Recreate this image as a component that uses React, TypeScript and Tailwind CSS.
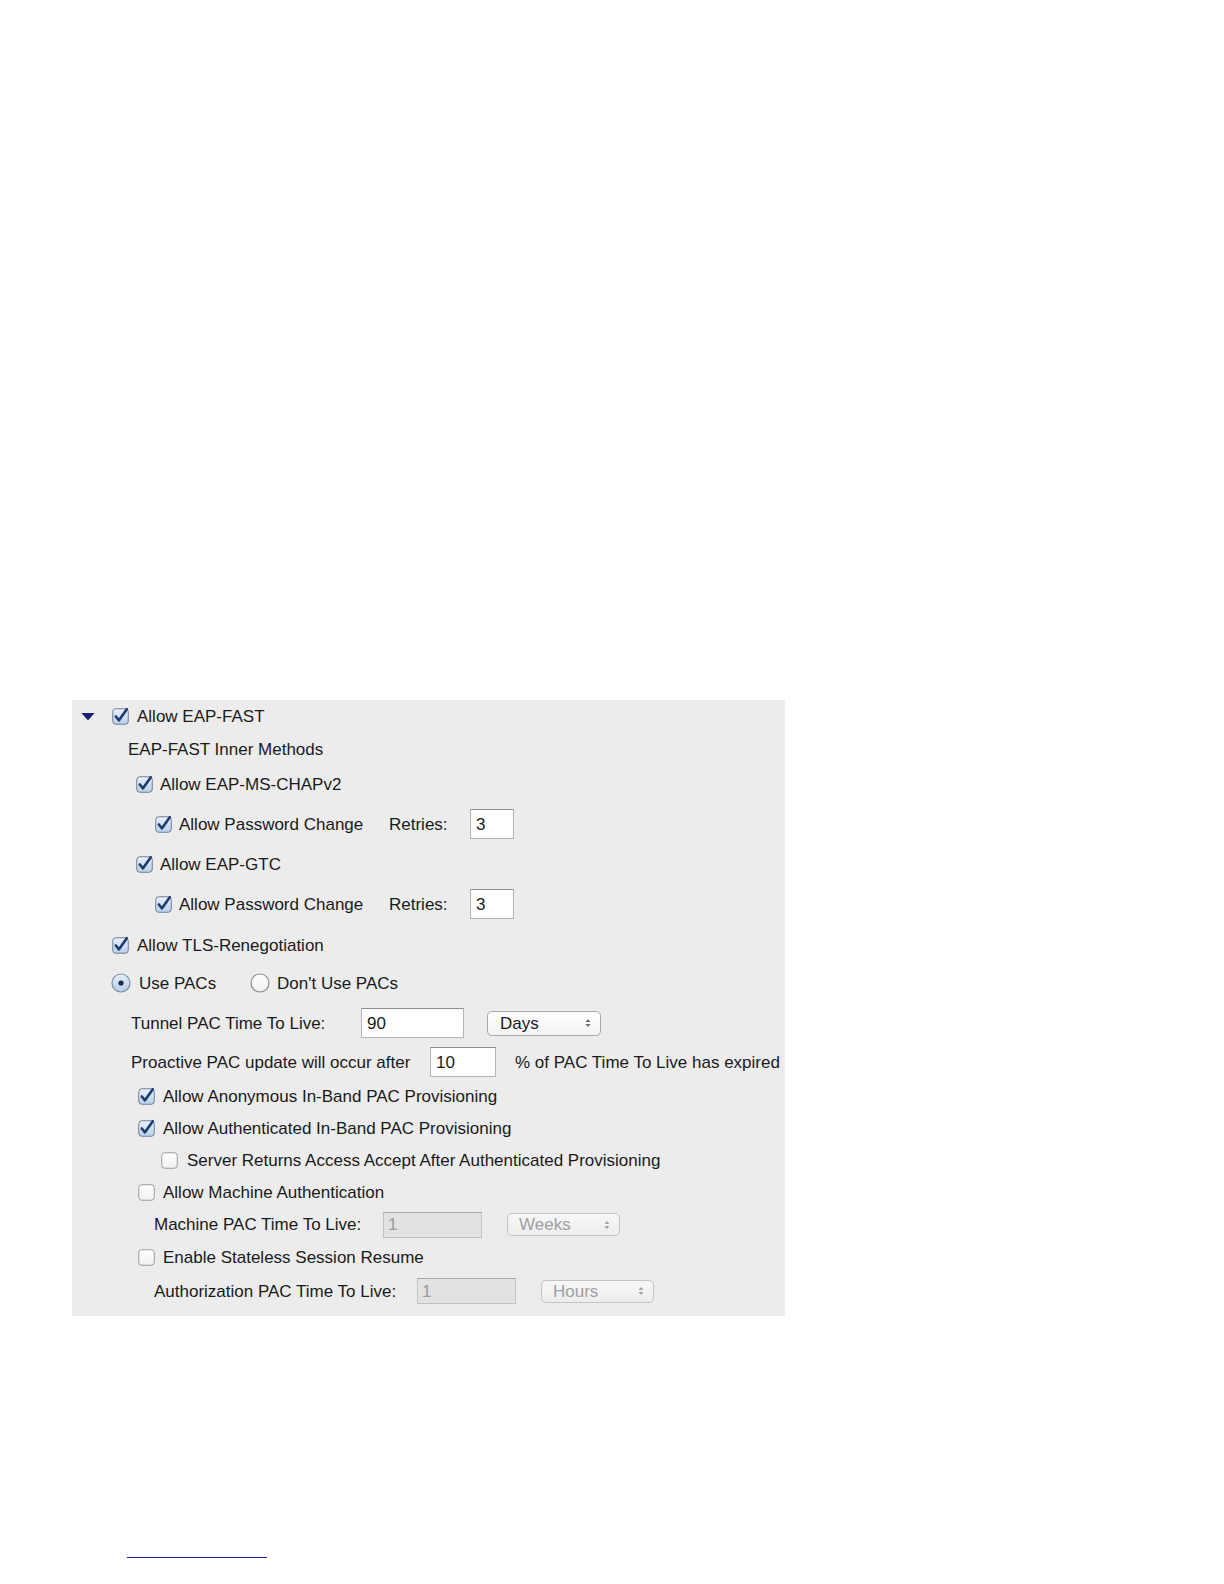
import React from "react";

function Check({ checked }: { checked: boolean }) {
  return (
    <svg width="17" height="17" viewBox="0 0 17 17" className="shrink-0 overflow-visible">
      <defs>
        <linearGradient id={checked ? "cbOn" : "cbOff"} x1="0" y1="0" x2="0" y2="1">
          {checked ? (
            <>
              <stop offset="0" stopColor="#e9f1fb" />
              <stop offset="1" stopColor="#b9cfe9" />
            </>
          ) : (
            <>
              <stop offset="0" stopColor="#ffffff" />
              <stop offset="1" stopColor="#f1f1f1" />
            </>
          )}
        </linearGradient>
      </defs>
      <rect x="0.75" y="0.75" width="15.5" height="15.5" rx="3" fill={`url(#${checked ? "cbOn" : "cbOff"})`} stroke={checked ? "#6d7f96" : "#9a9a9a"} strokeWidth="1" />
      {checked && (
        <path d="M3.8 8.5 L7 12.3 L14.8 1.2" fill="none" stroke="#1e3a70" strokeWidth="2.6" strokeLinecap="round" strokeLinejoin="round" />
      )}
    </svg>
  );
}

function Radio({ checked }: { checked: boolean }) {
  return (
    <svg width="20" height="20" viewBox="0 0 20 20" className="shrink-0">
      <defs>
        <linearGradient id={checked ? "rOn" : "rOff"} x1="0" y1="0" x2="0" y2="1">
          {checked ? (
            <>
              <stop offset="0" stopColor="#e6eefa" />
              <stop offset="1" stopColor="#b6cce8" />
            </>
          ) : (
            <>
              <stop offset="0" stopColor="#ffffff" />
              <stop offset="1" stopColor="#f0f0f0" />
            </>
          )}
        </linearGradient>
      </defs>
      <circle cx="10" cy="10" r="9" fill={`url(#${checked ? "rOn" : "rOff"})`} stroke={checked ? "#7c8ba0" : "#8e8e8e"} strokeWidth="1.2" />
      {checked && <circle cx="10" cy="10" r="2.6" fill="#1b2a44" />}
    </svg>
  );
}

function Arrows({ disabled }: { disabled?: boolean }) {
  const c = disabled ? "#a5a5a5" : "#6a6a6a";
  return (
    <svg width="8" height="12" viewBox="0 0 8 12" className="shrink-0">
      <path d="M1.5 5 L4 2 L6.5 5 Z" fill={c} />
      <path d="M1.5 7 L4 10 L6.5 7 Z" fill={c} />
    </svg>
  );
}

function Row({ h, children, pl }: { h: string; children: React.ReactNode; pl: string }) {
  return <div className={`flex items-center ${h} ${pl}`}>{children}</div>;
}

export default function App() {
  const txt = "text-[17px] leading-none text-[#1a1a1a]";
  return (
    <div
      className="min-h-[1584px] w-[1224px] bg-white pt-[700px]"
      style={{ fontFamily: '"Liberation Sans", Arial, Helvetica, sans-serif' }}
    >
      <div className={`ml-[72px] w-[713px] bg-[#ececec] pb-[8px] ${txt}`}>
        {/* Allow EAP-FAST */}
        <div className="flex h-[32px] items-center pl-[9px]">
          <svg width="14" height="9" viewBox="0 0 14 9" className="mr-[17px] shrink-0">
            <path d="M0.5 1 L13.5 1 L7 8.5 Z" fill="#1a1f6e" />
          </svg>
          <Check checked />
          <span className="ml-[8px]">Allow EAP-FAST</span>
        </div>
        <Row h="h-[34px]" pl="pl-[56px]">
          <span>EAP-FAST Inner Methods</span>
        </Row>
        <Row h="h-[36px]" pl="pl-[64px]">
          <Check checked />
          <span className="ml-[7px]">Allow EAP-MS-CHAPv2</span>
        </Row>
        <Row h="h-[44px]" pl="pl-[83px]">
          <Check checked />
          <span className="ml-[7px] w-[210px]">Allow Password Change</span>
          <span className="w-[81px]">Retries:</span>
          <div className="flex h-[30px] w-[44px] items-center border border-[#b4b4b4] border-t-[#8f8f8f] bg-white pl-[5px]">3</div>
        </Row>
        <Row h="h-[36px]" pl="pl-[64px]">
          <Check checked />
          <span className="ml-[7px]">Allow EAP-GTC</span>
        </Row>
        <Row h="h-[44px]" pl="pl-[83px]">
          <Check checked />
          <span className="ml-[7px] w-[210px]">Allow Password Change</span>
          <span className="w-[81px]">Retries:</span>
          <div className="flex h-[30px] w-[44px] items-center border border-[#b4b4b4] border-t-[#8f8f8f] bg-white pl-[5px]">3</div>
        </Row>
        <Row h="h-[38px]" pl="pl-[40px]">
          <Check checked />
          <span className="ml-[8px]">Allow TLS-Renegotiation</span>
        </Row>
        <Row h="h-[38px]" pl="pl-[39px]">
          <Radio checked />
          <span className="ml-[8px] w-[111px]">Use PACs</span>
          <Radio checked={false} />
          <span className="ml-[7px]">Don't Use PACs</span>
        </Row>
        <Row h="h-[42px]" pl="pl-[59px]">
          <span className="w-[230px]">Tunnel PAC Time To Live:</span>
          <div className="flex h-[30px] w-[103px] items-center border border-[#b4b4b4] border-t-[#8f8f8f] bg-white pl-[5px]">90</div>
          <div className="ml-[23px] flex h-[25px] w-[114px] items-center justify-between rounded-[5px] border border-[#a9a9a9] bg-gradient-to-b from-white to-[#f3f3f3] pl-[12px] pr-[8px]">
            <span>Days</span>
            <Arrows />
          </div>
        </Row>
        <Row h="h-[36px]" pl="pl-[59px]">
          <span className="w-[299px]">Proactive PAC update will occur after</span>
          <div className="flex h-[30px] w-[66px] items-center border border-[#b4b4b4] border-t-[#8f8f8f] bg-white pl-[5px]">10</div>
          <span className="ml-[19px]">% of PAC Time To Live has expired</span>
        </Row>
        <Row h="h-[32px]" pl="pl-[66px]">
          <Check checked />
          <span className="ml-[8px]">Allow Anonymous In-Band PAC Provisioning</span>
        </Row>
        <Row h="h-[32px]" pl="pl-[66px]">
          <Check checked />
          <span className="ml-[8px]">Allow Authenticated In-Band PAC Provisioning</span>
        </Row>
        <Row h="h-[32px]" pl="pl-[89px]">
          <Check checked={false} />
          <span className="ml-[9px]">Server Returns Access Accept After Authenticated Provisioning</span>
        </Row>
        <Row h="h-[32px]" pl="pl-[66px]">
          <Check checked={false} />
          <span className="ml-[8px]">Allow Machine Authentication</span>
        </Row>
        <Row h="h-[33px]" pl="pl-[82px]">
          <span className="w-[229px]">Machine PAC Time To Live:</span>
          <div className="flex h-[26px] w-[99px] items-center border border-[#c2c2c2] border-t-[#a5a5a5] bg-[#e2e2e2] pl-[4px] text-[#9a9a9a]">1</div>
          <div className="ml-[25px] flex h-[23px] w-[113px] items-center justify-between rounded-[5px] border border-[#c4c4c4] bg-gradient-to-b from-[#f7f7f7] to-[#ededed] pl-[11px] pr-[8px] text-[#a0a0a0]">
            <span>Weeks</span>
            <Arrows disabled />
          </div>
        </Row>
        <Row h="h-[33px]" pl="pl-[66px]">
          <Check checked={false} />
          <span className="ml-[8px]">Enable Stateless Session Resume</span>
        </Row>
        <Row h="h-[34px]" pl="pl-[82px]">
          <span className="w-[263px]">Authorization PAC Time To Live:</span>
          <div className="flex h-[26px] w-[99px] items-center border border-[#c2c2c2] border-t-[#a5a5a5] bg-[#e2e2e2] pl-[4px] text-[#9a9a9a]">1</div>
          <div className="ml-[25px] flex h-[23px] w-[113px] items-center justify-between rounded-[5px] border border-[#c4c4c4] bg-gradient-to-b from-[#f7f7f7] to-[#ededed] pl-[11px] pr-[8px] text-[#a0a0a0]">
            <span>Hours</span>
            <Arrows disabled />
          </div>
        </Row>
      </div>
      <div className="ml-[127px] mt-[241px] h-[1px] w-[140px] bg-[#1a1a8c]" />
    </div>
  );
}
